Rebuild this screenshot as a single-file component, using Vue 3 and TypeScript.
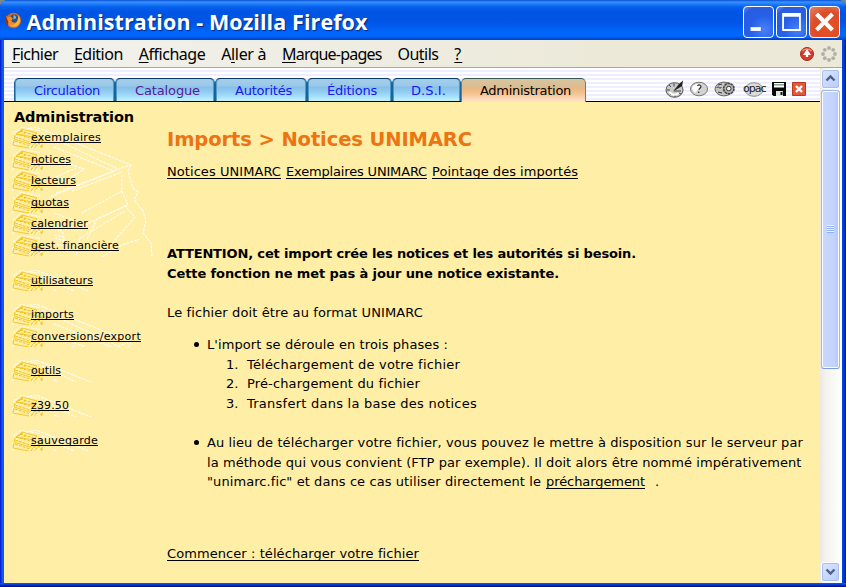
<script setup lang="ts">
interface MenuEntry { pre: string; key: string; post: string; w: number }
interface Entry { label: string; w: number }

const menus: MenuEntry[] = [
  { pre: '', key: 'F', post: 'ichier', w: 46 },
  { pre: '', key: 'E', post: 'dition', w: 49 },
  { pre: '', key: 'A', post: 'ffichage', w: 66.5 },
  { pre: 'A', key: 'l', post: 'ler à', w: 45 },
  { pre: '', key: 'M', post: 'arque-pages', w: 99.5 },
  { pre: 'Ou', key: 't', post: 'ils', w: 41 },
  { pre: '', key: '?', post: '', w: 8 },
]

const tabs = [
  { label: 'Circulation', w: 66, cls: 't1' },
  { label: 'Catalogue', w: 65, cls: 't2 visited' },
  { label: 'Autorités', w: 57, cls: 't3' },
  { label: 'Éditions', w: 50, cls: 't4' },
  { label: 'D.S.I.', w: 35, cls: 't5' },
  { label: 'Administration', w: 91, cls: 't6 active' },
]

const groups: Entry[][] = [
  [
    { label: 'exemplaires', w: 70 },
    { label: 'notices', w: 40 },
    { label: 'lecteurs', w: 45 },
    { label: 'quotas', w: 38 },
    { label: 'calendrier', w: 57 },
    { label: 'gest. financière', w: 88 },
  ],
  [{ label: 'utilisateurs', w: 62 }],
  [
    { label: 'imports', w: 43 },
    { label: 'conversions/export', w: 110 },
  ],
  [{ label: 'outils', w: 30 }],
  [{ label: 'z39.50', w: 38 }],
  [{ label: 'sauvegarde', w: 67 }],
]

const subLinks: Entry[] = [
  { label: 'Notices UNIMARC', w: 114 },
  { label: 'Exemplaires UNIMARC', w: 141 },
  { label: 'Pointage des importés', w: 146 },
]

const phases: Entry[] = [
  { label: 'Téléchargement de votre fichier', w: 213 },
  { label: 'Pré-chargement du fichier', w: 173 },
  { label: 'Transfert dans la base des notices', w: 230 },
]

/* Spreads the letters of a label so that it takes the given width. */
const vFit = {
  mounted(el: HTMLElement, binding: { value: number }) {
    const n = (el.textContent ?? '').length
    const natural = el.getBoundingClientRect().width
    if (n > 0) el.style.letterSpacing = `${(binding.value - natural) / n}px`
  },
}
</script>

<template>
  <div class="window">
    <header class="titlebar">
      <svg class="fox" viewBox="0 0 16 16">
        <circle cx="8" cy="8" r="7.2" fill="#d4661c" />
        <circle cx="8.600" cy="6.400" r="4" fill="#24508c" />
        <path d="M8 3c2 0 3 2 2 3l-2 1z" fill="#7fb4dc" />
        <path d="M1 3l1.500 2L5 4.200 7.500 6 6 8c1 2.200 3.500 2.600 5.500 1.400l-1 3-5 1.400L1.400 11z" fill="#f08a28" />
        <path d="M12.500 3c2.600 3 2.600 7-.2 9.400C10 14.600 6 14 4.400 12.400c4 .6 8.100-2.400 8.100-9.400z" fill="#f7b23c" />
        <path d="M1 4c-1 3-.8 7 2 9.200L3 9z" fill="#8c3410" />
      </svg>
      <h1><span v-fit="341">Administration - Mozilla Firefox</span></h1>
      <div class="controls">
        <span class="ctl"><svg viewBox="0 0 31 31"><rect x="7" y="21" width="11" height="4" fill="#fff" /></svg></span>
        <span class="ctl"><svg viewBox="0 0 31 31"><path d="M5.500 6h20v19h-20zM7.500 10v13h16V10z" fill="#fff" fill-rule="evenodd" /></svg></span>
        <span class="ctl close"><svg viewBox="0 0 31 31"><path d="M7 7l17 17M24 7L7 24" stroke="#fff" stroke-width="4.400" /></svg></span>
      </div>
    </header>

    <nav class="menubar">
      <span v-for="m in menus" :key="m.key" v-fit="m.w" class="menu">{{ m.pre }}<span class="key">{{ m.key }}</span>{{ m.post }}</span>
      <div class="status">
        <svg width="16" height="16" viewBox="0 0 16 16">
          <circle cx="8" cy="8" r="6.500" fill="#d83a26" stroke="#a63022" />
          <path d="M3.500 5C5 2.500 10 2 12.500 5" fill="none" stroke="#f28a70" stroke-width="1.500" />
          <path d="M8 3l4 6H9.200v2H6.800V9H4z" fill="#fff" />
        </svg>
        <svg width="16" height="16" viewBox="0 0 16 16" fill="#b0afaa">
          <circle cx="8" cy="2" r="1.900" /><circle cx="12.200" cy="3.800" r="1.900" />
          <circle cx="14" cy="8" r="1.900" /><circle cx="12.200" cy="12.200" r="1.900" />
          <circle cx="8" cy="14" r="1.900" /><circle cx="3.800" cy="12.200" r="1.900" />
          <circle cx="2" cy="8" r="1.900" /><circle cx="3.800" cy="3.800" r="1.900" />
        </svg>
      </div>
    </nav>

    <div class="viewport">
      <div class="page">
        <div class="topbar">
          <div class="tabs">
            <a v-for="t in tabs" :key="t.label" class="tab" :class="t.cls"><span v-fit="t.w">{{ t.label }}</span></a>
          </div>
          <div class="tools">
            <svg width="20" height="18" viewBox="0 0 20 18">
              <ellipse cx="9.500" cy="10" rx="8.500" ry="7.300" fill="#c9c9c7" stroke="#555" />
              <path d="M2 10h3M9 3.500v3M4 5l2 2M5 15l2-2M10 14v3M14 13l2 1" stroke="#444" />
              <path d="M4.500 12c2 3 6 4 9 1" stroke="#fff" fill="none" stroke-width="2" />
              <path d="M8 11.500L14 4l4-3.500-.8 5.500z" fill="#222" />
              <path d="M9 11h7" stroke="#444" />
            </svg>
            <svg width="20" height="18" viewBox="0 0 20 18">
              <ellipse cx="10" cy="9" rx="8.500" ry="6.800" fill="#d2d2d0" stroke="#777" />
              <path d="M3 9c0-5 7-6 10-4L6 13z" fill="#fff" />
              <path d="M8.500 6c1-1.800 4.200-1 3.300 1.200-.3.900-1.600 1-1.800 2.600M9.700 11.500v1.500" fill="none" stroke="#333" stroke-width="1.200" />
            </svg>
            <svg width="22" height="18" viewBox="0 0 22 18">
              <ellipse cx="10" cy="9" rx="9" ry="6.900" fill="#c4c4c2" stroke="#666" />
              <path d="M2.500 8c2-3 3 2 5-1M4 5l4-1M4 12l4 1" fill="none" stroke="#333" />
              <circle cx="14.800" cy="8.600" r="5.200" fill="#b4b4b2" stroke="#444" stroke-width="1.600" stroke-dasharray="2.600 .6" />
              <circle cx="14.800" cy="8.600" r="2.300" fill="#f2f2f2" stroke="#333" />
            </svg>
            <div class="opac">
              <svg width="24" height="18" viewBox="0 0 24 18">
                <ellipse cx="12" cy="9.500" rx="9" ry="6.800" fill="#dcdcda" stroke="#8c8c8c" />
              </svg>
              <span v-fit="22.5">opac</span>
            </div>
            <svg width="14" height="14" viewBox="0 0 14 14">
              <path d="M0 0h14v14H1.500L0 12.500z" fill="#080808" />
              <path d="M2 1h10v4.500H2z" fill="#fff" />
              <path d="M2 2h10v1.500H2z" fill="#86a286" />
              <path d="M4 9h7v5H4z" fill="#e2e6e0" />
              <path d="M8.500 10h2v3h-2z" fill="#111" />
            </svg>
            <svg width="14" height="14" viewBox="0 0 14 14">
              <path d="M.5.5h13v13H.5z" fill="#e4583a" stroke="#b93a22" />
              <path d="M4 4l6 6M10 4l-6 6" stroke="#fff" stroke-width="2.400" />
            </svg>
          </div>
        </div>

        <div class="body">
          <aside class="side">
            <h2><span v-fit="120">Administration</span></h2>
            <ul v-for="(g, i) in groups" :key="i" class="group">
              <svg class="roof" width="146" height="130" viewBox="0 0 146 130" fill="none" stroke="#fffdf5" stroke-width="1.100" stroke-dasharray="3 1">
                <path d="M4 5L26 0 121 38 114 40 40 70" />
                <path d="M32 6L108 42" />
                <path d="M44 20L104 44 46 66" />
                <path d="M47 60L74 42 44 32M46 50l20-9M62 64l50-19" />
                <path d="M121 38l-3 6 5 17 5 4-4 8 9 11 3 10-3 12 8 10 1 13" />
                <path d="M112 48v16l-40 22M112 64l6 14-48 22M77 112l10-20 28-13 10 11-26 30" />
                <path d="M44 86l34 12M45 100l8 6v8l-8-3M66 128l4-17 45-27M92 130l20-12 18-6M44 108l10 2v9l-10-3" />
              </svg>
              <li v-for="e in g" :key="e.label">
                <svg class="books" width="34" height="22" viewBox="0 0 34 22" fill="none">
                  <path d="M1 7L9 .5l19 3M0 14l5-5M0 21l6-7M9 9l12 3M6 15l12 4M20 21l10-4" stroke="#fffdf5" stroke-dasharray="3 1" />
                  <path d="M4 7L10 2l15 4-4 4zM3 8l-1 4 16 5 3-6M2 13l-1 5 16 3" stroke="#f2c41c" stroke-width=".9" />
                  <path d="M4 7l17 5M8 4l14 4M3 10l15 5M3 14l15 5M6 6l5-3M14 5l-4 3M21 11l9 2-8 4-3 4M30 13v8l-3-5-5 5M27 9l3 1" stroke="#f2c41c" stroke-width="1.100" stroke-dasharray="3 1" />
                </svg>
                <a v-fit="e.w">{{ e.label }}</a>
              </li>
            </ul>
          </aside>

          <main class="main">
            <h3><span v-fit="305">Imports &gt; Notices UNIMARC</span></h3>
            <div class="sublinks">
              <a v-for="s in subLinks" :key="s.label" v-fit="s.w">{{ s.label }}</a>
            </div>
            <div class="warning">
              <p><span v-fit="469">ATTENTION, cet import crée les notices et les autorités si besoin.</span></p>
              <p><span v-fit="392">Cette fonction ne met pas à jour une notice existante.</span></p>
            </div>
            <p class="format"><span v-fit="256">Le fichier doit être au format UNIMARC</span></p>
            <ul class="bullets">
              <li>
                <p><span v-fit="241">L'import se déroule en trois phases :</span></p>
                <div v-for="(p, i) in phases" :key="i" class="phase">
                  <span class="num">{{ i + 1 }}.</span><span v-fit="p.w">{{ p.label }}</span>
                </div>
              </li>
              <li>
                <p><span v-fit="596">Au lieu de télécharger votre fichier, vous pouvez le mettre à disposition sur le serveur par</span></p>
                <p><span v-fit="594.5">la méthode qui vous convient (FTP par exemple). Il doit alors être nommé impérativement</span></p>
                <p class="last"><span v-fit="334">"unimarc.fic" et dans ce cas utiliser directement le</span><a v-fit="99">préchargement</a><span class="dot">.</span></p>
              </li>
            </ul>
            <p class="start"><a v-fit="252">Commencer : télécharger votre fichier</a></p>
          </main>
        </div>
      </div>

      <div class="scrollbar">
        <span class="arrow"><svg viewBox="0 0 17 17"><path d="M4.500 10.500l4-4 4 4" fill="none" stroke="#4d6185" stroke-width="2.400" /></svg></span>
        <span class="thumb"><i></i><i></i><i></i><i></i></span>
        <span class="track"></span>
        <span class="arrow down"><svg viewBox="0 0 17 17"><path d="M4.500 6.500l4 4 4-4" fill="none" stroke="#4d6185" stroke-width="2.400" /></svg></span>
      </div>
    </div>
  </div>
</template>

<style>
body { background: #7b8a86; overflow: hidden; }
</style>

<style scoped>
* { box-sizing: border-box; }
h1, h2, h3, p, ul { margin: 0; padding: 0; }
ul { list-style: none; }
.window {
  width: 846px; height: 587px; display: flex; flex-direction: column;
  background: linear-gradient(90deg, #0019cf 0, #0830dc 1px, #0855e8 2px, #1660ea 3px, #0855e8 4px, #0048e8 842px, #0038d8 844px, #001590 846px);
  border-radius: 8px 8px 0 0; overflow: hidden;
  font-family: "DejaVu Sans", Verdana, sans-serif; font-size: 13px; color: #000;
  padding-bottom: 4px; position: relative;
}
.window::after { content: ""; position: absolute; left: 0; right: 0; bottom: 0; height: 4px; background: linear-gradient(#0b50e8 0 1px, #0040dc 1px 2px, #0024b4 2px 3px, #001390 3px); }
.titlebar {
  height: 40px; flex: none; display: flex; align-items: center; padding: 4px 6px 0 5px;
  background: linear-gradient(#0a4fd2 0, #3a92ff 2px, #1f7cfb 4px, #0560ec 7px, #0054e3 12px, #0055e5 22px, #0064fa 31px, #0068ff 36px, #0054e0 38px, #003cc4 40px);
}
.fox { width: 17px; height: 17px; margin-top: -4px; }
.titlebar h1 { flex: 1; margin-left: 4.500px; font: 700 21.500px/36px "Open Sans", "Noto Sans", sans-serif; color: #fff; text-shadow: 1px 1px 1px #0a2680; white-space: nowrap; }
.controls { display: flex; gap: 2px; margin-top: -1px; }
.ctl { width: 31px; height: 32px; border: 1px solid #fff; border-radius: 4px; background: radial-gradient(circle at 70% 75%, #4a80f8, #2560e8 45%, #2a5ce0 80%, #5e8ef0); }
.ctl svg { display: block; width: 29px; height: 30px; }
.close { background: radial-gradient(circle at 65% 70%, #e85020, #dc4c28 55%, #e88468); }
.menubar {
  height: 28px; flex: none; margin: 0 4px; padding: 1px 5px 0 8px; display: flex; align-items: center; gap: 15.900px;
  background: linear-gradient(90deg, #f2f2ee, #ece9d8 75%); border-bottom: 1px solid #aca899;
  font: 16px/26px "Noto Sans", "Open Sans", sans-serif; white-space: nowrap;
}
.key { text-decoration: underline; text-decoration-thickness: 1px; text-underline-offset: 2px; }
.status { margin-left: auto; display: flex; gap: 6px; }
.status svg { display: block; margin-top: -1px; }
.viewport { flex: 1; min-height: 0; margin: 0 4px; display: flex; }
.page { width: 816px; background: #ffeea6; display: flex; flex-direction: column; }
.topbar {
  height: 34px; flex: none; border-bottom: 1px solid #000; display: flex; align-items: flex-end; justify-content: space-between;
  padding: 0 14px 0 10px; background: repeating-linear-gradient(#fff 0 2px, #eeeeff 2px 4px);
}
.tabs { display: flex; }
.tab {
  height: 23px; border: 1px solid #1a6498; border-top-color: #093c68; border-bottom: 0; border-radius: 5px 5px 0 0;
  background: linear-gradient(#a4cfe8 0, #9bc8e8 7px, #84c0e8 8px, #94ccf2 13px, #a8e2fc 18px, #c4fcff 23px);
  box-shadow: inset 1px 0 #4a9ccc, inset -1px 0 #4a9ccc;
  color: #1717f2; line-height: 23px; white-space: nowrap; padding-left: 19px;
}
.t1 { width: 101px; }
.t2 { width: 100px; }
.t3 { width: 92px; }
.t4 { width: 85px; }
.t5 { width: 69px; padding-left: 18px; }
.t6 { width: 125px; padding-left: 18px; }
.visited { color: #551a99; }
.active {
  color: #000; border-color: #8b7854; border-top-color: #365b58; height: 24px; margin-bottom: -1px;
  background: linear-gradient(#d8c5a0 0, #d9bd92 8px, #edb67c 9px, #f4c494 15px, #fbd9b8 20px, #ffe8c8 24px);
  box-shadow: none;
}
.tools { display: flex; align-items: center; height: 24px; gap: 6px; }
.tools > svg, .opac svg { display: block; }
.tools > svg:first-child { margin-right: -2px; }
.tools > svg:nth-child(2) { margin-right: -1px; }
.opac { position: relative; width: 24px; height: 18px; }
.opac span { position: absolute; left: 1px; top: 0; font: 11px/17px "DejaVu Sans", sans-serif; color: #222; }
.body { display: flex; flex: 1; min-height: 0; }
.side { width: 163px; padding: 6px 0 0 8px; }
.side h2 { font-size: 14.500px; line-height: 19px; padding-left: 2px; white-space: nowrap; }
.group { position: relative; overflow: hidden; width: 146px; margin-bottom: 13px; }
.roof { position: absolute; left: -2px; top: 0; }
.group li { position: relative; height: 21.600px; padding-left: 19px; font-size: 11px; line-height: 21px; white-space: nowrap; }
.books { position: absolute; left: 0; top: 0; }
.group a { position: relative; }
a { color: inherit; }
.group a, .main a { text-decoration: underline; text-decoration-thickness: 1px; text-underline-offset: 2px; text-decoration-skip-ink: none; }
.group a { text-underline-offset: 1px; }
.main { flex: 1; line-height: 19.600px; padding-top: 26px; white-space: nowrap; }
.main h3 { font-size: 19.500px; line-height: 24px; color: #eb7413; }
.sublinks { display: flex; gap: 5px; margin-top: 10px; }
.warning { font-weight: 700; margin-top: 62.400px; }
.format { margin-top: 20px; }
.bullets { margin-top: 12.400px; padding-left: 40px; }
.bullets li { position: relative; margin-bottom: 19.600px; }
.bullets li::before { content: ""; position: absolute; left: -13px; top: 7px; width: 5px; height: 5px; border-radius: 50%; background: #000; }
.phase { display: flex; }
.num { width: 40px; padding-left: 19px; }
.last { display: flex; gap: 5px; }
.dot { margin-left: 5px; }
.start { margin-top: 52px; }
.scrollbar { width: 22px; display: flex; flex-direction: column; padding: 1px 2px 1px 1px; background: linear-gradient(90deg, #eceae0, #f4f3ee 6px, #fefefb 20px, #fff 20px); }
.arrow { height: 20px; flex: none; border: 1px solid #fff; outline: 1px solid #a9bff0; outline-offset: -2px; border-radius: 3px; background: linear-gradient(135deg, #dce6ff, #b8ccfa); }
.arrow svg { display: block; width: 17px; height: 17px; }
.thumb { height: 279px; flex: none; margin-top: 1px; border: 1px solid #9ab6ee; border-bottom-color: #7a9de0; border-radius: 3px; box-shadow: inset 0 0 0 1px #fff; background: linear-gradient(90deg, #cad8ff, #c2d3fd 70%, #b0c6f8); display: flex; flex-direction: column; align-items: center; justify-content: center; gap: 1px; }
.thumb i { width: 7px; height: 1px; background: #8cb0f8; box-shadow: 0 -1px #eef4ff; }
.track { flex: 1; }
</style>
